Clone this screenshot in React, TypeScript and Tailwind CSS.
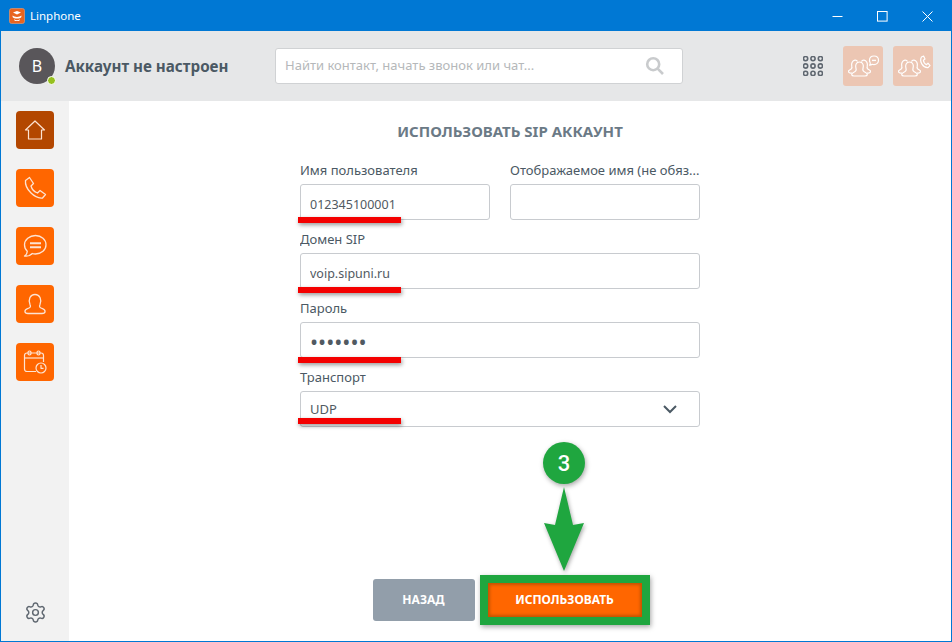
import React from "react";
import { Settings } from "lucide-react";

const font = { fontFamily: '"Noto Sans", "Open Sans", sans-serif' };

function Logo() {
  return (
    <svg width="16" height="16" viewBox="0 0 16 16">
      <rect x="0.5" y="0.5" width="15" height="15" rx="2" fill="#e8641f" stroke="#f3a06f" strokeWidth="0.6" />
      <path d="M4 4.6 L8 3 L12 4.6 L8 6.6 Z" fill="#fff" />
      <path d="M3.6 7.6 C5 9.4 11 9.4 12.4 7.6 V9 C11 11 5 11 3.6 9 Z" fill="#fff" />
      <path d="M5.2 11.2 C6.6 12.6 9.4 12.6 10.8 11.2 L10.8 12.2 C9.4 13.4 6.6 13.4 5.2 12.2 Z" fill="#fff" />
    </svg>
  );
}

function Minimize() {
  return <svg width="11" height="11" viewBox="0 0 11 11"><path d="M0.5 5.5H10.5" stroke="#fff" strokeWidth="1" /></svg>;
}
function Maximize() {
  return <svg width="11" height="11" viewBox="0 0 11 11"><rect x="0.5" y="0.5" width="9.6" height="9.6" fill="none" stroke="#fff" strokeWidth="1" /></svg>;
}
function CloseIcon() {
  return <svg width="11" height="11" viewBox="0 0 11 11"><path d="M0.5 0.5L10.5 10.5M10.5 0.5L0.5 10.5" stroke="#fff" strokeWidth="1" /></svg>;
}

function Grid() {
  const cs = [0, 1, 2];
  return (
    <svg width="20" height="20" viewBox="0 0 20 20" fill="none" stroke="#5f6770" strokeWidth="1.6">
      {cs.map((r) => cs.map((c) => <circle key={`${r}${c}`} cx={2.6 + c * 7.4} cy={2.6 + r * 7.4} r="2.1" />))}
    </svg>
  );
}

function People() {
  return (
    <g fill="none" stroke="#fff" strokeWidth="1.2" strokeLinejoin="round">
      <path d="M9 27 C5 27.5 4.5 25 7 23.8 C9 22.8 9.3 21.8 8.8 20.5 C8 17.5 9.5 14.5 12 14.2 C13 14.1 14 14.4 14.5 15.5" />
      <path d="M24 27 C28 27.5 28.5 25 26 23.8 C24 22.8 23.7 21.8 24.2 20.5 C25 17.5 23.5 14.5 21 14.2 C20 14.1 19 14.4 18.5 15.5" />
      <path d="M11 30 C8 30 8 27.5 10.5 26.5 C13 25.5 13.5 24 13 22.5 C12 19.5 13 16 16.5 16 C20 16 21 19.5 20 22.5 C19.5 24 20 25.5 22.5 26.5 C25 27.5 25 30 22 30 Z" />
    </g>
  );
}

function ChatPeople() {
  return (
    <svg width="40" height="40" viewBox="0 0 40 40" className="block">
      <People />
      <g fill="none" stroke="#fff" strokeWidth="1.2" strokeLinejoin="round">
        <path d="M31 10 C33.8 10 35.5 12 35.5 14.3 C35.5 16.8 33.4 18.6 31 18.6 C30.3 18.6 29.7 18.5 29.2 18.3 C28.4 19 27.6 19.2 26.6 19.2 C27.2 18.5 27.4 17.8 27.2 16.8 C26.8 16.1 26.5 15.2 26.5 14.3 C26.5 12 28.2 10 31 10 Z" />
        <path d="M29 14.4H33" strokeWidth="1.4" />
      </g>
    </svg>
  );
}

function PhonePeople() {
  return (
    <svg width="40" height="40" viewBox="0 0 40 40" className="block">
      <People />
      <path d="M28.5 11 L30.6 10 L32 13 L30.4 14.2 C30.6 16 32 18 33.6 18.6 L35 17.2 L37 19.6 L35 21.6 C30 22 26 15.5 28.5 11 Z" fill="none" stroke="#fff" strokeWidth="1.2" strokeLinejoin="round" />
    </svg>
  );
}

function Home() {
  return (
    <svg width="22" height="22" viewBox="0 0 22 22" fill="none" stroke="#fde3d2" strokeWidth="1.2" strokeLinejoin="round">
      <path d="M1.5 11 L11 2 L20.5 11 H17.5 V20 H4.5 V11 Z" />
    </svg>
  );
}
function Phone() {
  return (
    <svg width="24" height="24" viewBox="0 0 24 24" fill="none" stroke="#fde3d2" strokeWidth="1.3" strokeLinejoin="round">
      <path d="M2.5 4.5 L6.5 1.5 L10.5 7.5 L8 10 C8.8 13 11.5 16 14.5 17 L17 14.5 L22.5 18.5 L19.5 22 C12 23 1.5 13 2.5 4.5 Z" />
    </svg>
  );
}
function Chat() {
  return (
    <svg width="24" height="24" viewBox="0 0 24 24" fill="none" stroke="#fde3d2" strokeWidth="1.3" strokeLinejoin="round">
      <path d="M12.5 1.5 C18.5 1.5 23 5.7 23 10.8 C23 16 18.5 20 12.5 20 C11.3 20 10.3 19.9 9.3 19.5 C7.5 21.5 4.5 22.5 1.5 22 C3.2 21 4.2 19.5 4.3 17.3 C2.4 15.6 1.5 13.2 1.5 10.8 C1.5 5.7 6.5 1.5 12.5 1.5 Z" />
      <path d="M7 9.3H18M7 13.3H18" strokeWidth="1.9" />
    </svg>
  );
}
function Contact() {
  return (
    <svg width="24" height="24" viewBox="0 0 24 24" fill="none" stroke="#fde3d2" strokeWidth="1.3" strokeLinejoin="round">
      <path d="M5 21.5 C1 21.5 1 17.8 4.5 16.6 C7.6 15.6 8 14.6 7 12.6 C5 8 7 2.5 12 2.5 C17 2.5 19 8 17 12.6 C16 14.6 16.4 15.6 19.5 16.6 C23 17.8 23 21.5 19 21.5 Z" />
    </svg>
  );
}
function Calendar() {
  return (
    <svg width="24" height="24" viewBox="0 0 24 24" fill="none" stroke="#fde3d2" strokeWidth="1.2" strokeLinejoin="round">
      <path d="M13 21.5 H4 C2.5 21.5 1.5 20.5 1.5 19 V5.5 C1.5 4 2.5 3 4 3 H18 C19.5 3 20.5 4 20.5 5.5 V12" />
      <path d="M1.5 8H20.5" />
      <rect x="5" y="1" width="3" height="4" rx="1.4" />
      <rect x="14" y="1" width="3" height="4" rx="1.4" />
      <circle cx="18" cy="18" r="5" />
      <path d="M18 15V18.3H20.5" />
    </svg>
  );
}

function SideButton({ active, children }: { active?: boolean; children: React.ReactNode }) {
  return (
    <div className={`flex h-[38px] w-[38px] items-center justify-center rounded-[4px] ${active ? "bg-[#b34700]" : "bg-[#ff6600]"}`}>
      {children}
    </div>
  );
}

function Field({ label, value, type = "text", className = "", inputClass = "text-[12.5px] pt-[4px]" }: { label: string; value: string; type?: string; className?: string; inputClass?: string }) {
  return (
    <label className={`block ${className}`}>
      <span className="block h-[33px] truncate pt-[10px] text-[13px] leading-[18px] text-[#4b5964]">{label}</span>
      <input
        readOnly
        type={type}
        value={value}
        className={`block h-[36px] w-full rounded-[3px] border border-[#c8cbcf] bg-white px-[9px] text-[#515a62] outline-none ${inputClass}`}
        style={font}
      />
    </label>
  );
}

function Underline({ top }: { top: number }) {
  return <div className="absolute left-[297px] h-[6px] w-[103px] bg-[#f40000] shadow-[1px_2px_4px_rgba(0,0,0,0.4)]" style={{ top }} />;
}

export default function App() {
  return (
    <div className="relative flex h-[642px] w-[952px] flex-col overflow-hidden border border-[#0078d4] bg-white" style={font}>
      <div className="flex h-[30px] shrink-0 items-center bg-[#0078d4] pl-[8px] text-white">
        <Logo />
        <span className="ml-[5px] text-[11.5px]">Linphone</span>
        <div className="ml-auto flex items-center gap-[34px] pr-[18px]">
          <Minimize />
          <Maximize />
          <CloseIcon />
        </div>
      </div>

      <div className="flex h-[70px] shrink-0 items-center bg-[#e6e7e8] pl-[18px] pr-[18px]">
        <div className="relative flex h-[36px] w-[36px] items-center justify-center rounded-full bg-[#59565a] text-[16px] text-white">
          B
          <span className="absolute bottom-[-1px] right-[-1px] h-[9px] w-[9px] rounded-full border border-white bg-[#96c11f]" />
        </div>
        <span className="ml-[10px] w-[210px] text-[15.2px] font-bold text-[#4b5964]">Аккаунт не настроен</span>
        <div className="flex h-[36px] w-[408px] items-center justify-between rounded-[3px] border border-[#d0d2d4] bg-white pl-[9px] pr-[17px]">
          <span className="text-[13px] text-[#b5b8ba]">Найти контакт, начать звонок или чат...</span>
          <svg width="20" height="20" viewBox="0 0 20 20" fill="none" stroke="#c9cbcd" strokeWidth="2.6">
            <circle cx="8.2" cy="8.2" r="6" />
            <path d="M12.6 12.6L18 18" />
          </svg>
        </div>
        <div className="ml-auto flex items-center">
          <Grid />
          <div className="ml-[20px] h-[40px] w-[40px] rounded-[3px] bg-[#ecc6b3]"><ChatPeople /></div>
          <div className="ml-[10px] h-[40px] w-[40px] rounded-[3px] bg-[#ecc6b3]"><PhonePeople /></div>
        </div>
      </div>

      <div className="flex min-h-0 flex-1">
        <aside className="flex w-[68px] shrink-0 flex-col items-center bg-[#f2f2f2] pb-[17px] pt-[10px]">
          <div className="flex flex-col gap-[20px]">
            <SideButton active><Home /></SideButton>
            <SideButton><Phone /></SideButton>
            <SideButton><Chat /></SideButton>
            <SideButton><Contact /></SideButton>
            <SideButton><Calendar /></SideButton>
          </div>
          <div className="mt-auto">
            <Settings size={23} strokeWidth={1.5} color="#5f6770" />
          </div>
        </aside>

        <main className="relative flex flex-1 flex-col items-center pb-[16px]">
          <h1 className="mt-[20px] text-[15px] font-bold leading-[20px] text-[#6b7a86]">ИСПОЛЬЗОВАТЬ SIP АККАУНТ</h1>
          <div className="mr-[20px] mt-[10px] w-[400px]">
            <div className="flex gap-[20px]">
              <Field className="w-[190px]" label="Имя пользователя" value="012345100001" />
              <Field className="w-[190px]" label="Отображаемое имя (не обяз..." value="" />
            </div>
            <Field label="Домен SIP" value="voip.sipuni.ru" />
            <Field label="Пароль" value="1234567" type="password" inputClass="text-[21.5px] pt-[3px]" />
            <div>
              <span className="block h-[33px] pt-[10px] text-[13px] leading-[18px] text-[#4b5964]">Транспорт</span>
              <div className="flex h-[36px] items-center justify-between rounded-[3px] border border-[#c8cbcf] bg-white pl-[9px] pr-[22px] text-[13px] text-[#515a62]">
                <span className="pt-[1px]">UDP</span>
                <svg width="14" height="9" viewBox="0 0 14 9" fill="none" stroke="#4b5964" strokeWidth="2"><path d="M1 1L7 7L13 1" /></svg>
              </div>
            </div>
          </div>
          <div className="mt-auto flex translate-x-[1px] items-center">
            <button className="h-[42px] w-[102px] rounded-[3px] bg-[#929eaa] text-[12px] font-bold text-white">НАЗАД</button>
            <button className="ml-[5px] flex h-[50px] w-[170px] items-center justify-center bg-[#ff6600] text-[12px] font-bold text-white shadow-[inset_0_0_0_8px_#1fa63f,inset_0_0_3px_10px_rgba(150,70,0,0.55),1px_2px_5px_rgba(0,0,0,0.35)]">
              ИСПОЛЬЗОВАТЬ
            </button>
          </div>
        </main>
      </div>

      <Underline top={216} />
      <Underline top={286} />
      <Underline top={356} />
      <Underline top={417} />

      <div className="absolute left-[542px] top-[441px] flex h-[42px] w-[42px] items-center justify-center rounded-full bg-[#1fa63f] text-[22px] font-medium text-white shadow-[1px_2px_5px_rgba(0,0,0,0.35)]" style={{ fontFamily: 'Roboto, sans-serif' }}>3</div>
      <svg className="absolute left-[541px] top-[486px]" width="44" height="88" viewBox="0 0 44 88" style={{ filter: "drop-shadow(1px 2px 2px rgba(0,0,0,0.35))" }}>
        <path d="M22 0 L31 38 L42 36 L22 84 L2 36 L13 38 Z" fill="#1fa63f" />
      </svg>
    </div>
  );
}
